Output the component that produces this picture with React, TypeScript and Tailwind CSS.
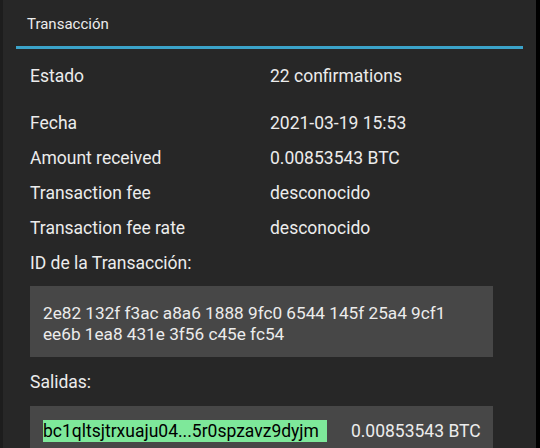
export default function App() {
  const rows = [
    { label: 'Fecha', value: '2021-03-19 15:53' },
    { label: 'Amount received', value: '0.00853543 BTC' },
    { label: 'Transaction fee', value: 'desconocido' },
    { label: 'Transaction fee rate', value: 'desconocido' },
  ];

  return (
    <div className="flex h-[448px] w-[540px] overflow-hidden bg-black font-['Roboto',sans-serif] text-[#ececec]">
      <div className="w-[3px] bg-[#1d1d1d]" />
      <div className="flex w-[533px] flex-col bg-[#272727]">
        {/* header */}
        <div className="px-[13px]">
          <div className="flex h-[46px] items-center pl-[11px] pt-[2px] text-[15px]">Transacción</div>
          <div className="h-[3px] bg-[#3ba3c9]" />
        </div>

        {/* details */}
        <div className="flex flex-col px-[27px] text-[17.5px]">
          <div className="flex h-[46px] items-end pb-[6px]">
            <span className="w-[240px]">Estado</span>
            <span>22 confirmations</span>
          </div>
          <div className="h-[11px]" />
          {rows.map((r) => (
            <div key={r.label} className="flex h-[35px] items-center">
              <span className="w-[240px]">{r.label}</span>
              <span>{r.value}</span>
            </div>
          ))}
          <div className="flex h-[35px] items-center">ID de la Transacción:</div>

          <div className="mr-[16px] mt-[5px] bg-[#474747] pb-[12px] pl-[13px] pt-[17px] text-[17.2px] leading-[21px]">
            <div>2e82 132f f3ac a8a6 1888 9fc0 6544 145f 25a4 9cf1</div>
            <div>ee6b 1ea8 431e 3f56 c45e fc54</div>
          </div>

          <div className="flex h-[49px] items-center pt-[2px]">Salidas:</div>

          <div className="mr-[16px] flex h-[60px] items-start bg-[#474747] pl-[13px] pt-[14px]">
            <span className="bg-[#7ee89a] pr-[8px] leading-[22px] text-black">bc1qltsjtrxuaju04...5r0spzavz9dyjm</span>
            <span className="ml-[24px] leading-[22px] whitespace-nowrap">0.00853543 BTC</span>
          </div>
        </div>
      </div>
      <div className="flex-1 bg-black" />
    </div>
  );
}
